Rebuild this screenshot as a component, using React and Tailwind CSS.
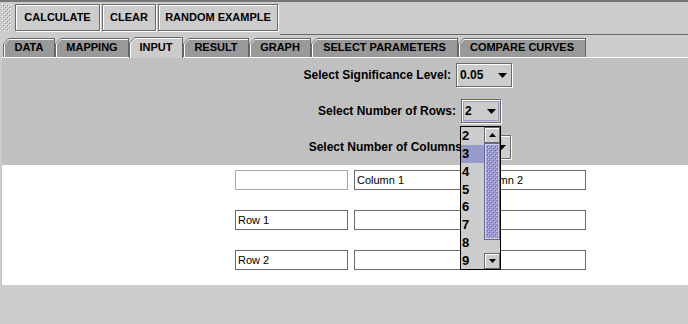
import React from 'react';
import clsx from 'clsx';

const Bumps = ({ id, w, h, hi, lo, bg }) => (
  <svg width={w} height={h} className="block">
    <defs>
      <pattern id={id} width="4" height="4" patternUnits="userSpaceOnUse">
        <rect x="0" y="0" width="1" height="1" fill={hi} />
        <rect x="1" y="1" width="1" height="1" fill={lo} />
        <rect x="2" y="2" width="1" height="1" fill={hi} />
        <rect x="3" y="3" width="1" height="1" fill={lo} />
      </pattern>
    </defs>
    <rect width={w} height={h} fill={bg} />
    <rect width={w} height={h} fill={`url(#${id})`} />
  </svg>
);

const ToolButton = ({ label, w }) => (
  <button className={clsx('h-[27px] mr-[2px] bg-[#cccccc] border border-[#6a6a6a] shadow-[inset_1px_1px_0_#fff,1px_1px_0_#fff] text-[11px] font-bold text-black leading-none whitespace-nowrap', w)}>
    {label}
  </button>
);

const Tab = ({ label, w, selected }) => (
  <div className={clsx('relative', w, selected ? 'h-[21px] -mb-px z-10' : 'h-[19px]')}>
    <div className="absolute inset-0 bg-[#666666] [clip-path:polygon(6px_0,100%_0,100%_100%,0_100%,0_6px)]" />
    <div className="absolute top-[1px] left-[1px] right-[1px] bottom-0 bg-white [clip-path:polygon(5px_0,100%_0,100%_100%,0_100%,0_5px)]" />
    <div
      className={clsx(
        'absolute top-[2px] left-[2px] right-[1px] bottom-0 [clip-path:polygon(4px_0,100%_0,100%_100%,0_100%,0_4px)]',
        selected ? 'bg-[#cccccc]' : 'bg-[#999999]'
      )}
    />
    <div className={clsx('relative flex justify-center text-[11px] font-bold text-black leading-none', selected ? 'pt-[5px]' : 'pt-[4px]')}>
      {label}
    </div>
  </div>
);

const Arrow = () => (
  <svg width="9" height="5" className="block">
    <polygon points="0,0 9,0 4.5,5" fill="#000" />
  </svg>
);

const Combo = ({ value, w, focus }) => (
  <div className={clsx('relative h-[24px] bg-[#cccccc] border border-[#6a6a6a] shadow-[inset_1px_1px_0_#fff,1px_1px_0_#fff] flex items-center', w)}>
    {focus && <div className="absolute inset-[1px] border border-[#9999cc]" />}
    <span className="pl-[3px] text-[12px] font-bold leading-none flex-1">{value}</span>
    <span className="pr-[4px]">
      <Arrow />
    </span>
  </div>
);

const ParamRow = ({ label, children, pr }) => (
  <div className={clsx('flex justify-end items-center gap-[5px] h-[24px]', pr)}>
    <span className="text-[12px] font-bold text-black whitespace-nowrap">{label}</span>
    {children}
  </div>
);

const Field = ({ text, light }) => (
  <div className={clsx('w-[113px] h-[20px] border flex items-center pl-[2px] text-[11px] text-black', light ? 'border-[#a8a8a8]' : 'border-[#6a6a6a]')}>
    {text}
  </div>
);

const ScrollBtn = ({ up }) => (
  <div className="h-[16px] bg-[#cccccc] border border-[#6a6a6a] shadow-[inset_1px_1px_0_#fff] flex items-center justify-center">
    <svg width="7" height="4" className="block">
      <polygon points={up ? '3.5,0 7,4 0,4' : '0,0 7,0 3.5,4'} fill="#000" />
    </svg>
  </div>
);

const Popup = () => (
  <div className="absolute left-[460px] top-[126px] w-[41px] h-[144px] border border-black bg-[#cccccc] flex z-20">
    <div className="w-[24px] flex flex-col">
      {['2', '3', '4', '5', '6', '7', '8', '9'].map((n) => (
        <div
          key={n}
          className={clsx('h-[18px] pl-[1px] flex items-center text-[13px] font-bold leading-none text-black', n === '3' && 'bg-[#9999cc]')}
        >
          {n}
        </div>
      ))}
    </div>
    <div className="w-[16px] flex flex-col">
      <ScrollBtn up />
      <div className="h-[97px] border border-[#666699] shadow-[inset_1px_1px_0_#ccccff] p-[1px]">
        <Bumps id="thumb" w={12} h={93} hi="#ccccff" lo="#666699" bg="#9999cc" />
      </div>
      <div className="h-[13px] bg-[#cccccc]" />
      <ScrollBtn />
    </div>
  </div>
);

export default function App() {
  return (
    <div className="relative w-[688px] h-[324px] overflow-hidden bg-[#cccccc] font-['Liberation_Sans',Arial,sans-serif] text-black">
      <div className="h-[2px] bg-[#777777]" />
      <div className="h-[32px] flex items-start pt-[2px] pl-[2px]">
        <div className="mr-[4px]">
          <Bumps id="grip" w={9} h={27} hi="#ffffff" lo="#888888" bg="#cccccc" />
        </div>
        <ToolButton label="CALCULATE" w="w-[85px]" />
        <ToolButton label="CLEAR" w="w-[54px]" />
        <ToolButton label="RANDOM EXAMPLE" w="w-[120px]" />
      </div>
      <div className="h-px ml-[280px] bg-[#666666]" />
      <div className="h-[22px] flex items-end pl-[3px]">
        <Tab label="DATA" w="w-[52px]" />
        <Tab label="MAPPING" w="w-[74px]" />
        <Tab label="INPUT" w="w-[54px]" selected />
        <Tab label="RESULT" w="w-[66px]" />
        <Tab label="GRAPH" w="w-[62px]" />
        <Tab label="SELECT PARAMETERS" w="w-[147px]" />
        <Tab label="COMPARE CURVES" w="w-[128px]" />
      </div>
      <div className="h-px ml-[2px] bg-white" />
      <div className="ml-[2px] h-[107px] bg-[#c0c0c0] pt-[5px] flex flex-col gap-[12px]">
        <ParamRow label="Select Significance Level:" pr="pr-[176px]">
          <Combo value="0.05" w="w-[56px]" />
        </ParamRow>
        <ParamRow label="Select Number of Rows:" pr="pr-[187px]">
          <Combo value="2" w="w-[40px]" focus />
        </ParamRow>
        <ParamRow label="Select Number of Columns:" pr="pr-[177px]">
          <Combo value="2" w="w-[40px]" />
        </ParamRow>
      </div>
      <div className="ml-[1px] h-[120px] bg-white border-l border-[#c0c0c0] pt-[5px] pl-[233px] flex flex-col gap-[20px]">
        <div className="flex gap-[6px]">
          <Field text="" light />
          <Field text="Column 1" />
          <Field text="Column 2" />
        </div>
        <div className="flex gap-[6px]">
          <Field text="Row 1" />
          <Field text="" />
          <Field text="" />
        </div>
        <div className="flex gap-[6px]">
          <Field text="Row 2" />
          <Field text="" />
          <Field text="" />
        </div>
      </div>
      <Popup />
    </div>
  );
}
